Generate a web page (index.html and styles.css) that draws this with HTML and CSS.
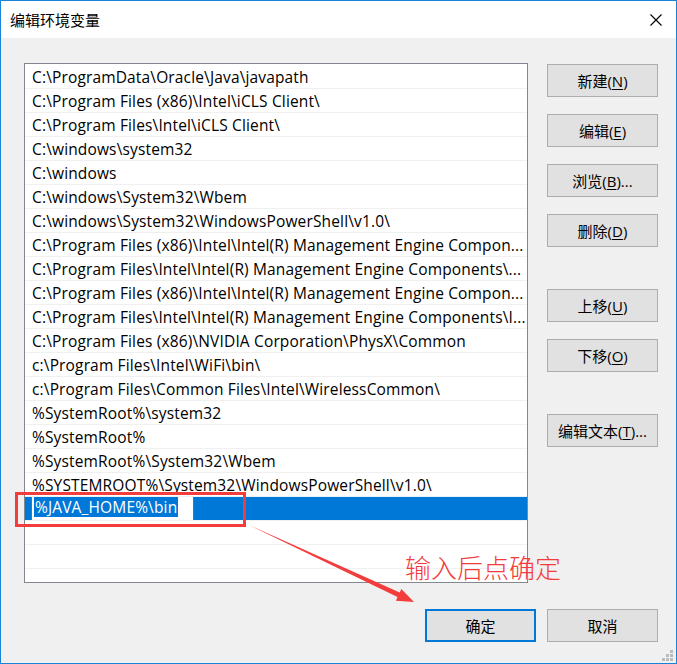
FILE: index.html
```html
<!DOCTYPE html>
<html lang="zh-CN">
<head>
<meta charset="utf-8">
<title>编辑环境变量</title>
<link rel="stylesheet" href="styles.css">
</head>
<body>
<div class="window">
  <div class="titlebar">
    <span class="title">编辑环境变量</span>
    <svg class="close" width="12" height="12" viewBox="0 0 12 12"><path d="M0.5 0.5 L11.5 11.5 M11.5 0.5 L0.5 11.5" stroke="#000" stroke-width="1.1" fill="none"/></svg>
  </div>
  <div class="content">
    <div class="main">
      <div class="list">
        <div class="row">C:\ProgramData\Oracle\Java\javapath</div>
        <div class="row">C:\Program Files (x86)\Intel\iCLS Client\</div>
        <div class="row">C:\Program Files\Intel\iCLS Client\</div>
        <div class="row">C:\windows\system32</div>
        <div class="row">C:\windows</div>
        <div class="row">C:\windows\System32\Wbem</div>
        <div class="row">C:\windows\System32\WindowsPowerShell\v1.0\</div>
        <div class="row">C:\Program Files (x86)\Intel\Intel(R) Management Engine Compon...</div>
        <div class="row">C:\Program Files\Intel\Intel(R) Management Engine Components\...</div>
        <div class="row">C:\Program Files (x86)\Intel\Intel(R) Management Engine Compon...</div>
        <div class="row">C:\Program Files\Intel\Intel(R) Management Engine Components\I...</div>
        <div class="row">C:\Program Files (x86)\NVIDIA Corporation\PhysX\Common</div>
        <div class="row">c:\Program Files\Intel\WiFi\bin\</div>
        <div class="row">c:\Program Files\Common Files\Intel\WirelessCommon\</div>
        <div class="row">%SystemRoot%\system32</div>
        <div class="row">%SystemRoot%</div>
        <div class="row">%SystemRoot%\System32\Wbem</div>
        <div class="row">%SYSTEMROOT%\System32\WindowsPowerShell\v1.0\</div>
        <div class="row selected"><span class="edit"><span class="sel">%JAVA_HOME%\bin</span></span></div>
        <div class="row"></div>
        <div class="row"></div>
        <div class="row"></div>
      </div>
      <div class="side">
        <button class="btn">新建(<u>N</u>)</button>
        <button class="btn">编辑(<u>E</u>)</button>
        <button class="btn">浏览(<u>B</u>)...</button>
        <button class="btn">删除(<u>D</u>)</button>
        <button class="btn spaced">上移(<u>U</u>)</button>
        <button class="btn">下移(<u>O</u>)</button>
        <button class="btn spaced">编辑文本(<u>T</u>)...</button>
      </div>
    </div>
    <div class="footer">
      <button class="btn default">确定</button>
      <button class="btn">取消</button>
    </div>
  </div>
  <svg class="grip" width="11" height="11" viewBox="0 0 11 11">
    <rect x="8" y="0" width="3" height="3" fill="#bcbcbc"/>
    <rect x="4" y="4" width="3" height="3" fill="#bcbcbc"/>
    <rect x="8" y="4" width="3" height="3" fill="#bcbcbc"/>
    <rect x="0" y="8" width="3" height="3" fill="#bcbcbc"/>
    <rect x="4" y="8" width="3" height="3" fill="#bcbcbc"/>
    <rect x="8" y="8" width="3" height="3" fill="#bcbcbc"/>
  </svg>
  <div class="redbox"></div>
  <svg class="arrow" width="677" height="664" viewBox="0 0 677 664">
    <polygon points="249,525 399.7,592.5 401.3,588.9 414,602 395.9,600.7 397.5,597.1" fill="#f33c3c"/>
  </svg>
  <div class="note">输入后点确定</div>
</div>
</body>
</html>
```
FILE: styles.css
```css
html, body {
  margin: 0;
  padding: 0;
  background: #f0f0f0;
}
.window {
  position: relative;
  width: 677px;
  height: 664px;
  box-sizing: border-box;
  border: 1px solid #1883d7;
  background: #f0f0f0;
  font-family: "Open Sans", "Noto Sans CJK SC", sans-serif;
  font-size: 15px;
  color: #000;
  overflow: hidden;
}
.titlebar {
  height: 37px;
  background: #fff;
  display: flex;
  align-items: center;
  justify-content: space-between;
  padding: 0 14px 0 9px;
}
.title {
  font-family: "Noto Sans CJK SC", sans-serif;
  font-size: 15px;
}
.close {
  display: block;
}
.content {
  padding: 25px 18px 0 23px;
}
.main {
  display: flex;
  gap: 19px;
}
.list {
  width: 504px;
  height: 520px;
  box-sizing: border-box;
  border: 1px solid #828790;
  background: #fff;
  padding-top: 1px;
  overflow: hidden;
  font-size: 15.5px;
  letter-spacing: 0.15px;
}
.row {
  height: 23px;
  line-height: 24px;
  border-bottom: 1px solid #f0f0f0;
  padding-left: 7px;
  white-space: nowrap;
  overflow: hidden;
}
.row.selected {
  background: #0078d7;
  padding-left: 6px;
  line-height: 20px;
}
.edit {
  display: inline-flex;
  box-sizing: border-box;
  width: 163px;
  height: 26px;
  margin-top: -1px;
  border: 1px solid #6e6e6e;
  background: #fff;
  padding-left: 2px;
  vertical-align: top;
}
.sel {
  background: #0078d7;
  color: #fff;
  height: 20px;
  line-height: 21px;
  padding: 0 1px;
}
.side {
  width: 111px;
  padding-top: 1px;
  display: flex;
  flex-direction: column;
  gap: 17px;
}
.btn {
  height: 33px;
  width: 111px;
  box-sizing: border-box;
  border: 1px solid #adadad;
  background: #e1e1e1;
  font-family: "Open Sans", "Noto Sans CJK SC", sans-serif;
  font-size: 15px;
  color: #000;
  padding: 0;
  margin: 0;
}
.btn u {
  text-decoration-thickness: 1px;
  text-underline-offset: 2px;
}
.btn.spaced {
  margin-top: 25px;
}
.btn.default {
  border: 2px solid #0078d7;
}
.footer {
  display: flex;
  justify-content: flex-end;
  gap: 11px;
  margin-top: 26px;
}
.grip {
  position: absolute;
  left: 661px;
  top: 649px;
}
.redbox {
  position: absolute;
  left: 14px;
  top: 491px;
  width: 231px;
  height: 35px;
  box-sizing: border-box;
  border: 3px solid #f33c3c;
}
.arrow {
  position: absolute;
  left: -1px;
  top: -1px;
  pointer-events: none;
}
.note {
  position: absolute;
  left: 404px;
  top: 553px;
  font-family: "Noto Sans CJK SC", sans-serif;
  font-weight: 300;
  font-size: 26px;
  line-height: 1;
  color: #f33c3c;
  white-space: nowrap;
}
```
